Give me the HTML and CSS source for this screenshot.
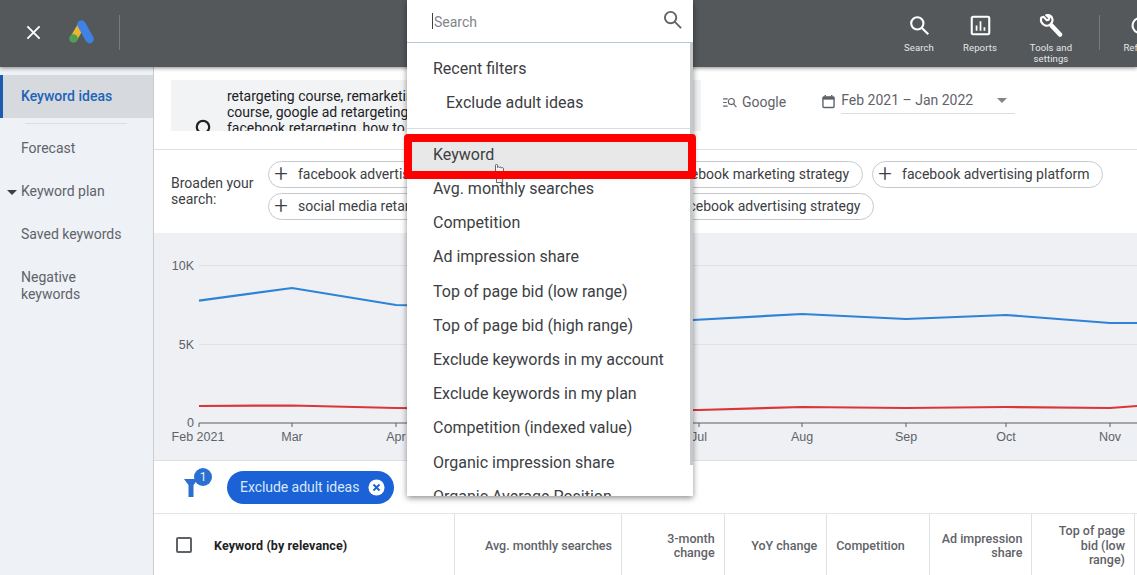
FILE: index.html
```html
<!DOCTYPE html>
<html lang="en">
<head>
<meta charset="utf-8">
<title>Keyword ideas</title>
<link rel="stylesheet" href="styles.css">
</head>
<body>
<div class="app">
  <header class="topbar">
    <div class="brand">
      <svg class="close-icon" viewBox="0 0 16 16"><path d="M1.500 1.500 14.500 14.500M14.500 1.500 1.500 14.500"/></svg>
      <svg class="ads-logo" viewBox="0 0 28 26">
        <path class="ads-yellow" d="M6 19 13.500 6"/>
        <path class="ads-blue" d="M13.500 5.500 21.500 20"/>
        <circle class="ads-green" cx="5.500" cy="19.500" r="4.300"/>
      </svg>
      <span class="bar-divider"></span>
    </div>
    <nav class="tools">
      <div class="tool tool-search">
        <svg viewBox="0 0 24 24"><circle cx="9.500" cy="9.500" r="7"/><path d="M14.500 14.500 22 22"/></svg>
        <span>Search</span>
      </div>
      <div class="tool tool-reports">
        <svg viewBox="0 0 24 24"><rect x="2" y="2" width="20" height="20" rx="1.500"/><path class="thin" d="M7.500 12v6M12 7v11M16.500 14v4"/></svg>
        <span>Reports</span>
      </div>
      <div class="tool tool-settings">
        <svg class="wrench" viewBox="0 0 24 24"><path class="wrench-head" d="M4.500 2.800 7.800 6.200l2-.6.500-2L7.300 1.200c3.500-.8 6.400 1.600 6.200 5 0 .8-.2 1.400-.5 2-1.100 2.700-4 4-6.700 3.300C3.200 10.700 1 7 2.400 3.500z"/><path class="wrench-handle" d="M12.500 11.500 21 20.500"/></svg>
        <span>Tools and<br>settings</span>
      </div>
      <span class="bar-divider"></span>
      <div class="tool tool-refresh">
        <svg viewBox="0 0 24 24"><path d="M20 12a8.500 8.500 0 1 1-2.500-6"/></svg>
        <span>Refresh</span>
      </div>
    </nav>
  </header>

  <div class="body">
    <aside class="sidebar">
      <div class="side-item side-active">Keyword ideas</div>
      <div class="side-rule"></div>
      <div class="side-item">Forecast</div>
      <div class="side-item side-caret">Keyword plan</div>
      <div class="side-item">Saved keywords</div>
      <div class="side-item side-double">Negative<br>keywords</div>
    </aside>

    <main class="main">
      <section class="query">
        <div class="query-box">
          <svg class="query-icon" viewBox="0 0 18 18"><circle cx="9" cy="9" r="6.200"/></svg>
          <p class="query-text">retargeting course, remarketing course, google ad retargeting, facebook retargeting, how to retarget on facebook</p>
        </div>
        <div class="network">
          <svg viewBox="0 0 16 12"><path d="M1 2h5M1 6h4M1 10h5"/><circle cx="10" cy="5" r="3.300"/><path d="M12.500 7.500 15.500 11"/></svg>
          <span>Google</span>
        </div>
        <div class="date">
          <svg viewBox="0 0 14 15"><path class="cal-fill" d="M1 2.500h12v3H1z"/><rect x="1" y="2.500" width="12" height="11.500" rx="1"/><path d="M3.500 .5v2M10.500 .5v2"/></svg>
          <div class="date-field">
            <span>Feb 2021 – Jan 2022</span>
            <i class="date-caret"></i>
          </div>
        </div>
      </section>

      <section class="broaden">
        <div class="broaden-label">Broaden your search:</div>
        <div class="chips">
          <div class="chip chip-first"><b>+</b>facebook advertising campaign</div>
          <div class="chip"><b>+</b>facebook marketing strategy</div>
          <div class="chip"><b>+</b>facebook advertising platform</div>
          <div class="chip chip-second"><b>+</b>social media retargeting</div>
          <div class="chip"><b>+</b>facebook advertising strategy</div>
        </div>
      </section>

      <section class="chart">
        <svg viewBox="154 233 983 228" width="983" height="228">
          <path class="grid" d="M199 265.500H1137M199 344.500H1137"/>
          <path class="axis" d="M199 423H1137M199 423v4M292 423v4M396 423v4M699 423v4M802 423v4M906 423v4M1006 423v4M1110 423v4"/>
          <polyline class="line-blue" points="199,300.700 292,288 396,305 460,306 693,320 802,314 906,319 1006,315 1110,323 1137,323"/>
          <polyline class="line-red" points="199,406 292,405.500 396,408 500,409 699,410 802,407 906,408 1006,407 1110,408 1137,406"/>
          <text class="tick" x="194" y="270" text-anchor="end">10K</text>
          <text class="tick" x="194" y="349" text-anchor="end">5K</text>
          <text class="tick" x="194" y="427" text-anchor="end">0</text>
          <text class="tick" x="198" y="441" text-anchor="middle">Feb 2021</text>
          <text class="tick" x="292" y="441" text-anchor="middle">Mar</text>
          <text class="tick" x="396" y="441" text-anchor="middle">Apr</text>
          <text class="tick" x="699" y="441" text-anchor="middle">Jul</text>
          <text class="tick" x="802" y="441" text-anchor="middle">Aug</text>
          <text class="tick" x="906" y="441" text-anchor="middle">Sep</text>
          <text class="tick" x="1006" y="441" text-anchor="middle">Oct</text>
          <text class="tick" x="1110" y="441" text-anchor="middle">Nov</text>
        </svg>
      </section>

      <section class="filters">
        <div class="funnel">
          <svg viewBox="0 0 14 18"><path d="M0 0h14L9.500 6v12h-5V6z"/></svg>
          <span class="funnel-badge">1</span>
        </div>
        <div class="filter-pill">
          <span>Exclude adult ideas</span>
          <svg viewBox="0 0 18 18"><circle cx="9" cy="9" r="8.500"/><path d="M5.800 5.800 12.200 12.200M12.200 5.800 5.800 12.200"/></svg>
        </div>
      </section>

      <section class="table-head">
        <div class="col col-keyword"><i class="checkbox"></i><strong>Keyword (by relevance)</strong></div>
        <div class="col col-avg">Avg. monthly searches</div>
        <div class="col col-std">3-month<br>change</div>
        <div class="col col-std">YoY change</div>
        <div class="col col-std col-left">Competition</div>
        <div class="col col-std">Ad impression<br>share</div>
        <div class="col col-std">Top of page<br>bid (low<br>range)</div>
      </section>
    </main>
  </div>

  <div class="menu">
    <div class="menu-search">
      <span class="menu-caret"></span>
      <span class="menu-placeholder">Search</span>
      <svg viewBox="0 0 20 20"><circle cx="8" cy="8" r="6"/><path d="M12.500 12.500 19 19"/></svg>
    </div>
    <div class="menu-scroll">
      <div class="menu-row">Recent filters</div>
      <div class="menu-row menu-indent">Exclude adult ideas</div>
      <div class="menu-rule"></div>
      <div class="menu-row menu-hover">Keyword</div>
      <div class="menu-row">Avg. monthly searches</div>
      <div class="menu-row">Competition</div>
      <div class="menu-row">Ad impression share</div>
      <div class="menu-row">Top of page bid (low range)</div>
      <div class="menu-row">Top of page bid (high range)</div>
      <div class="menu-row">Exclude keywords in my account</div>
      <div class="menu-row">Exclude keywords in my plan</div>
      <div class="menu-row">Competition (indexed value)</div>
      <div class="menu-row">Organic impression share</div>
      <div class="menu-row">Organic Average Position</div>
    </div>
  </div>
  <svg class="hand" viewBox="0 0 13 19"><path d="M3.500 8V1.300c0-1.500 2-1.500 2 0V3.500c.3-1 2-1 2 .2.300-.9 2-.8 2 .3.400-.7 2-.5 2 .6V11c0 1-.4 1.700-.8 2.500v5H4.500V15L1 9.500c-.8-1.200.8-2.200 1.600-1.200z"/></svg>
  <div class="highlight"></div>
</div>
</body>
</html>
```
FILE: styles.css
```css
* { box-sizing: border-box; }
html, body { margin: 0; height: 100%; overflow: hidden; }
body { font-family: Roboto, "Liberation Sans", sans-serif; color: #3c4043; background: #fff; }
.app { position: relative; width: 1137px; height: 575px; overflow: hidden; display: flex; flex-direction: column; }

/* header */
.topbar { flex: 0 0 67px; display: flex; background: #54585b; box-shadow: 0 1px 4px rgba(0,0,0,.45); position: relative; z-index: 2; overflow: hidden; }
.brand { flex: 0 0 889px; display: flex; align-items: center; padding: 0 0 3px 26px; }
.close-icon { width: 15px; height: 15px; fill: none; stroke: #fff; stroke-width: 2; }
.ads-logo { width: 28px; height: 26px; margin-left: 27px; fill: none; stroke-linecap: round; }
.ads-yellow { stroke: #e8b833; stroke-width: 7.500; }
.ads-blue { stroke: #3f82e4; stroke-width: 8.500; }
.ads-green { fill: #4f9e53; }
.bar-divider { width: 1px; height: 35px; background: #777b7e; flex: none; }
.brand .bar-divider { margin-left: 23px; }
.tools { flex: 0 0 auto; display: flex; align-items: flex-start; }
.tools .bar-divider { margin: 15px 7px 0 8px; }
.tool { display: flex; flex-direction: column; align-items: center; padding-top: 15px; color: #e6e7e8; font-size: 9.500px; line-height: 11px; text-align: center; letter-spacing: .1px; flex: none; }
.tool svg { width: 21px; height: 21px; margin-bottom: 6px; fill: none; stroke: #fff; stroke-width: 2.400; }
.tool-search { width: 60px; }
.tool-reports { width: 62px; }
.tool-settings { width: 80px; }
.tool-refresh { width: 66px; }
.tool-reports svg .thin { stroke-width: 2; }
.tool svg.wrench { width: 24px; height: 24px; margin: -1px 0 4px; }
.wrench-head { fill: none; stroke: #fff; stroke-width: 2.200; stroke-linejoin: round; }
.wrench-handle { stroke: #fff; stroke-width: 4.500; stroke-linecap: round; }

/* body */
.body { flex: 1; display: flex; min-height: 0; }
.sidebar { flex: 0 0 154px; background: #eef1f6; border-right: 1px solid #c9cbce; padding-top: 8px; font-size: 14px; color: #5f6368; }
.side-item { height: 43px; padding-left: 21px; display: flex; align-items: center; position: relative; line-height: 17px; }
.side-active { background: #d6d9de; color: #1d63b8; font-weight: 500; border-left: 3px solid #1a5cb0; padding-left: 18px; }
.side-rule { height: 1px; margin: 5px 26px 3px 25px; background: #dcdee2; }
.side-caret::before { content: ""; position: absolute; left: 7px; top: 20px; border: 5px solid transparent; border-top: 5px solid #3c4043; border-bottom: 0; }
.side-double { height: 60px; align-items: flex-start; padding-top: 13px; }

.main { flex: 1; min-width: 0; display: flex; flex-direction: column; }

/* query row */
.query { flex: 0 0 83px; display: flex; align-items: flex-start; padding: 13px 0 0 17px; border-bottom: 1px solid #dfe1e3; }
.query-box { flex: 0 0 530px; height: 51px; background: #f1f3f4; overflow: hidden; display: flex; position: relative; padding: 8px 0 0 56px; }
.query-icon { position: absolute; left: 23px; top: 38px; width: 18px; height: 18px; fill: none; stroke: #202124; stroke-width: 2.200; }
.query-text { margin: 0; width: 205px; font-size: 14px; line-height: 16px; color: #202124; }
.network { display: flex; align-items: center; gap: 5px; margin: 14px 0 0 21px; font-size: 14px; color: #5f6368; }
.network svg { width: 15px; height: 11px; fill: none; stroke: #5f6368; stroke-width: 1.200; }
.date { display: flex; margin: 10px 0 0 36px; }
.date svg { width: 13px; height: 15px; margin: 4px 6px 0 0; fill: none; stroke: #5f6368; stroke-width: 1.500; }
.date svg .cal-fill { fill: #5f6368; stroke: none; }
.date-field { width: 174px; height: 24px; border-bottom: 1px solid #dadce0; font-size: 14px; color: #5f6368; line-height: 20px; display: flex; justify-content: space-between; }
.date-caret { margin: 8px 8px 0 0; border: 5px solid transparent; border-top: 5px solid #80868b; border-bottom: 0; height: 0; }

/* broaden */
.broaden { flex: 0 0 83px; display: flex; padding: 11px 0 0 17px; }
.broaden-label { width: 97px; font-size: 14px; line-height: 16px; color: #3c4043; padding-top: 14px; }
.chips { flex: 1; display: flex; flex-wrap: wrap; align-content: flex-start; gap: 5px 9px; }
.chip { height: 27px; border: 1px solid #c6c9cc; border-radius: 14px; padding: 0 13px 0 4px; font-size: 14px; line-height: 25px; color: #3c4043; white-space: nowrap; overflow: hidden; display: flex; }
.chip b { width: 16px; margin-right: 9px; font-size: 24px; font-weight: 300; text-align: center; color: #3c4043; }
.chip-first { width: 364px; }
.chip-second { width: 369px; }

/* chart */
.chart { flex: 0 0 228px; background: #eef0f4; border-bottom: 1px solid #dfe1e3; overflow: hidden; }
.chart svg { display: block; }
.grid { stroke: #e0e1e3; stroke-width: 1; fill: none; }
.axis { stroke: #5a5d60; stroke-width: 1; fill: none; }
.line-blue { fill: none; stroke: #2e82d8; stroke-width: 2.200; }
.line-red { fill: none; stroke: #d9363a; stroke-width: 2.200; }
.tick { font-family: "Liberation Sans", Arial, sans-serif; font-size: 12.500px; fill: #5f6368; }

/* filter bar */
.filters { flex: 0 0 53px; display: flex; align-items: flex-start; border-bottom: 1px solid #e3e4e6; padding-left: 30px; position: relative; }
.funnel { width: 43px; height: 40px; position: relative; }
.funnel svg { position: absolute; left: 0; top: 18px; width: 14px; height: 18px; fill: #2b6fd0; }
.funnel-badge { position: absolute; left: 10px; top: 7px; width: 18px; height: 18px; border-radius: 50%; background: #2b6fd0; color: #e6f0fb; font-size: 12px; line-height: 18px; text-align: center; }
.filter-pill { margin-top: 10px; width: 167px; height: 33px; background: #1a62d6; border-radius: 17px; padding: 0 9px 1px 13px; color: #d9e8fb; font-size: 14px; letter-spacing: -.05px; display: flex; align-items: center; justify-content: space-between; }
.filter-pill svg { width: 17px; height: 17px; fill: #fff; stroke: #1a62d6; stroke-width: 2; }
.filter-pill svg circle { stroke: none; }

/* table header */
.table-head { flex: 1; display: flex; min-height: 0; font-size: 12.500px; font-weight: 500; line-height: 14.500px; color: #5f6368; }
.col { border-right: 1px solid #e0e1e3; display: flex; align-items: center; justify-content: flex-end; text-align: right; padding: 3px 9px 0 0; }
.col-keyword { flex: 0 0 301px; justify-content: flex-start; padding-left: 22px; }
.col-avg { flex: 0 0 167px; }
.col-std { flex: 0 0 102.600px; }
.col-left { justify-content: flex-start; padding-left: 9px; }
.col-keyword strong { font-size: 12.500px; font-weight: 700; color: #202124; letter-spacing: .1px; }
.checkbox { width: 16px; height: 16px; border: 2px solid #5f6368; border-radius: 2px; margin-right: 22px; position: relative; top: -1px; }

/* dropdown */
.menu { position: absolute; left: 407px; top: 0; width: 286px; height: 496px; background: #fff; box-shadow: 0 2px 6px rgba(0,0,0,.45); z-index: 3; display: flex; flex-direction: column; overflow: hidden; font-size: 16px; color: #3c4043; }
.menu-search { flex: 0 0 43px; display: flex; align-items: center; padding: 0 11px 0 25px; border-bottom: 1px solid #b5c7dc; position: relative; }
.menu-caret { width: 1px; height: 16px; background: #3c4043; }
.menu-placeholder { flex: 1; font-size: 14px; line-height: 16px; padding-top: 1px; color: #80868b; margin-left: 1px; }
.menu-search svg { width: 19px; height: 19px; margin-bottom: 3px; fill: none; stroke: #5f6368; stroke-width: 2; }
.menu-scroll { flex: 1; padding-top: 9px; border-right: 3px solid #c7c8ca; border-image: linear-gradient(#c7c8ca 421px, transparent 421px) 1; overflow: hidden; }
.menu-row { height: 34.200px; line-height: 34px; padding-left: 26px; white-space: nowrap; }
.menu-indent { padding-left: 39px; }
.menu-rule { height: 1px; background: #dadce0; margin: 8px 0 8.500px; }
.menu-hover { background: #e8e8e8; }

.hand { position: absolute; left: 492px; top: 164px; width: 13px; height: 19px; z-index: 4; fill: #f4f4f4; stroke: #55585b; stroke-width: .9; }
.highlight { position: absolute; left: 404px; top: 134px; width: 292px; height: 45px; border: 8px solid #f00; border-radius: 4px; z-index: 5; }
```
